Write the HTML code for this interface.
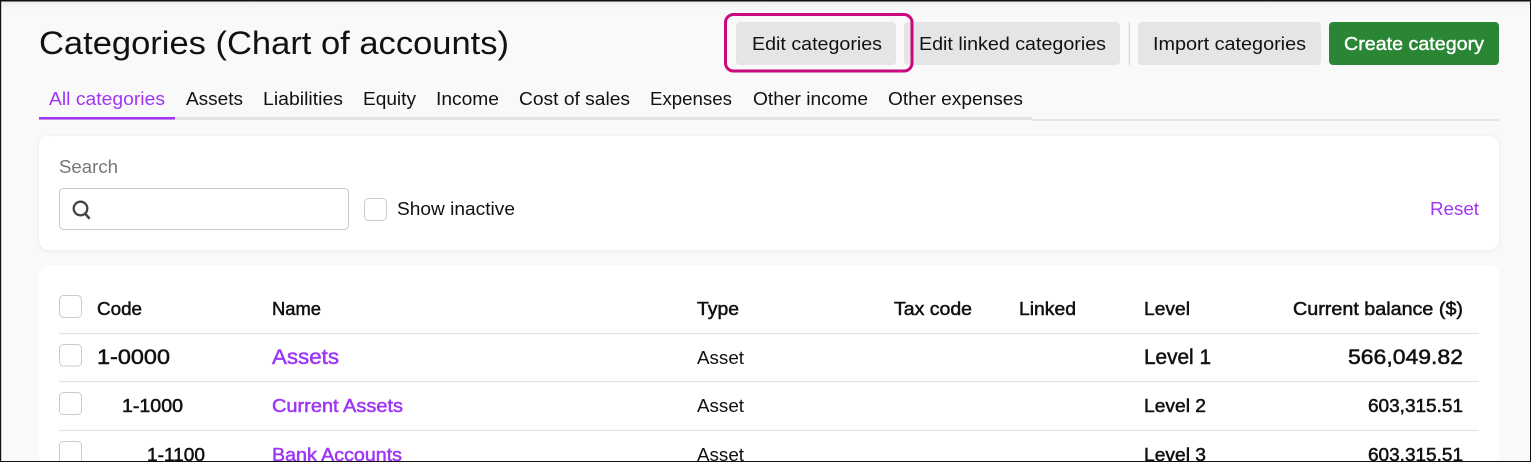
<!DOCTYPE html>
<html lang="en">
<head>
<meta charset="utf-8">
<title>Categories (Chart of accounts)</title>
<style>
html,body{margin:0;padding:0;width:1531px;height:462px;overflow:hidden;background:#f9f9f9}
svg{display:block;position:absolute;left:0;top:0}
text{font-family:"Liberation Sans",sans-serif;font-size:18px;fill:#111}
.m{stroke:#111;stroke-width:.35px}
.b{stroke:#111;stroke-width:.5px}
.p{fill:#9f36f5}
.pb{fill:#9f36f5;stroke:#9f36f5;stroke-width:.5px}
.cb{fill:#fff;stroke:#ccc;stroke-width:1}
.ln{stroke:#e4e4e4;stroke-width:1.2}
.btn{fill:#e5e5e5}
</style>
</head>
<body>
<svg width="1531" height="462" viewBox="0 0 1531 462" xmlns="http://www.w3.org/2000/svg">
<defs>
<filter id="s" x="-2%" y="-10%" width="104%" height="120%"><feDropShadow dx="0" dy="1" stdDeviation="2.5" flood-color="#000" flood-opacity=".07"/></filter>
<linearGradient id="tg" x1="0" y1="0" x2="0" y2="1"><stop offset="0" stop-color="#ececec"/><stop offset="1" stop-color="#f9f9f9"/></linearGradient>
<clipPath id="frame"><rect x="0" y="0" width="1531" height="461"/></clipPath>
</defs>
<rect width="1531" height="462" fill="#f9f9f9"/>
<rect x="0" y="1" width="1531" height="8" fill="url(#tg)"/>

<text x="39" y="54" style="font-size:32px" textLength="470" lengthAdjust="spacingAndGlyphs">Categories (Chart of accounts)</text>

<rect class="btn" x="736" y="22" width="160" height="43" rx="4"/>
<rect class="btn" x="904" y="22" width="216" height="43" rx="4"/>
<rect x="1128.500" y="22" width="1.500" height="43" fill="#dedede"/>
<rect class="btn" x="1138" y="22" width="183" height="43" rx="4"/>
<rect x="1329" y="22" width="170" height="43" rx="4" fill="#2a8535"/>
<rect x="725.500" y="14.500" width="186.500" height="56.500" rx="8" fill="none" stroke="#c9087f" stroke-width="3"/>
<text x="752" y="50" textLength="130" lengthAdjust="spacingAndGlyphs">Edit categories</text>
<text x="919" y="50" textLength="187" lengthAdjust="spacingAndGlyphs">Edit linked categories</text>
<text x="1153" y="50" textLength="153" lengthAdjust="spacingAndGlyphs">Import categories</text>
<text x="1344" y="50" textLength="140" lengthAdjust="spacingAndGlyphs" style="fill:#fff;stroke:#fff;stroke-width:.4px">Create category</text>

<rect x="1032" y="119" width="467" height="2" fill="#e5e5e5"/>
<rect x="39" y="117" width="993" height="3" fill="#e3e3e3"/>
<rect x="39" y="117" width="136" height="2.500" fill="#9f36f5"/>
<text class="p" x="49" y="105" textLength="116" lengthAdjust="spacingAndGlyphs">All categories</text>
<text x="186" y="105" textLength="57" lengthAdjust="spacingAndGlyphs">Assets</text>
<text x="263" y="105" textLength="80" lengthAdjust="spacingAndGlyphs">Liabilities</text>
<text x="363" y="105" textLength="53" lengthAdjust="spacingAndGlyphs">Equity</text>
<text x="436" y="105" textLength="63" lengthAdjust="spacingAndGlyphs">Income</text>
<text x="519" y="105" textLength="111" lengthAdjust="spacingAndGlyphs">Cost of sales</text>
<text x="650" y="105" textLength="82" lengthAdjust="spacingAndGlyphs">Expenses</text>
<text x="753" y="105" textLength="115" lengthAdjust="spacingAndGlyphs">Other income</text>
<text x="888" y="105" textLength="135" lengthAdjust="spacingAndGlyphs">Other expenses</text>

<rect x="39" y="136" width="1460" height="114" rx="10" fill="#fff" filter="url(#s)"/>
<text x="59" y="173" textLength="59" lengthAdjust="spacingAndGlyphs" style="fill:#777">Search</text>
<rect x="59.500" y="188.500" width="289" height="41" rx="4" fill="#fff" stroke="#c8c8c8"/>
<circle cx="80.500" cy="208.500" r="6.800" fill="none" stroke="#444" stroke-width="2.300"/>
<path d="M85 213.500 L89 218" fill="none" stroke="#444" stroke-width="2.500" stroke-linecap="round"/>
<rect class="cb" x="364.500" y="198.500" width="22" height="22" rx="4"/>
<text x="397" y="215" textLength="118" lengthAdjust="spacingAndGlyphs">Show inactive</text>
<text class="p" x="1430" y="215" textLength="49" lengthAdjust="spacingAndGlyphs">Reset</text>

<path d="M39 461 V275 a10 10 0 0 1 10 -10 H1489 a10 10 0 0 1 10 10 V461 Z" fill="#fff"/>

<rect class="cb" x="59.500" y="295.500" width="22" height="22" rx="4"/>
<text class="b" x="97" y="315" textLength="45" lengthAdjust="spacingAndGlyphs">Code</text>
<text class="b" x="272" y="315" textLength="49" lengthAdjust="spacingAndGlyphs">Name</text>
<text class="b" x="697" y="315" textLength="42" lengthAdjust="spacingAndGlyphs">Type</text>
<text class="b" x="894" y="315" textLength="78" lengthAdjust="spacingAndGlyphs">Tax code</text>
<text class="b" x="1019" y="315" textLength="57" lengthAdjust="spacingAndGlyphs">Linked</text>
<text class="b" x="1144" y="315" textLength="46" lengthAdjust="spacingAndGlyphs">Level</text>
<text class="b" x="1293" y="315" textLength="170" lengthAdjust="spacingAndGlyphs">Current balance ($)</text>
<line class="ln" x1="59" y1="333.500" x2="1479" y2="333.500"/>

<rect class="cb" x="59.500" y="344.500" width="22" height="21.500" rx="4"/>
<text class="b" x="97" y="364" style="font-size:21px" textLength="73" lengthAdjust="spacingAndGlyphs">1-0000</text>
<text class="pb" x="272" y="364" style="font-size:21px" textLength="67" lengthAdjust="spacingAndGlyphs">Assets</text>
<text x="697" y="364" textLength="47" lengthAdjust="spacingAndGlyphs">Asset</text>
<text class="b" x="1144" y="364" style="font-size:21px" textLength="67" lengthAdjust="spacingAndGlyphs">Level 1</text>
<text class="b" x="1348" y="364" style="font-size:21px" textLength="115" lengthAdjust="spacingAndGlyphs">566,049.82</text>
<line class="ln" x1="59" y1="381.500" x2="1479" y2="381.500"/>

<rect class="cb" x="59.500" y="392.500" width="22" height="22" rx="4"/>
<text class="b" x="122" y="412" textLength="61" lengthAdjust="spacingAndGlyphs">1-1000</text>
<text class="pb" x="272" y="412" textLength="131" lengthAdjust="spacingAndGlyphs">Current Assets</text>
<text x="697" y="412" textLength="47" lengthAdjust="spacingAndGlyphs">Asset</text>
<text class="b" x="1144" y="412" textLength="62" lengthAdjust="spacingAndGlyphs">Level 2</text>
<text class="b" x="1368" y="412" textLength="95" lengthAdjust="spacingAndGlyphs">603,315.51</text>
<line class="ln" x1="59" y1="430.500" x2="1479" y2="430.500"/>

<g clip-path="url(#frame)">
<path d="M59.500 461 V445.500 a4 4 0 0 1 4 -4 H77.500 a4 4 0 0 1 4 4 V461" fill="#fff" stroke="#ccc"/>
<text class="b" x="147" y="461" textLength="58" lengthAdjust="spacingAndGlyphs">1-1100</text>
<text class="pb" x="272" y="461" textLength="130" lengthAdjust="spacingAndGlyphs">Bank Accounts</text>
<text x="697" y="461" textLength="47" lengthAdjust="spacingAndGlyphs">Asset</text>
<text class="b" x="1144" y="461" textLength="62" lengthAdjust="spacingAndGlyphs">Level 3</text>
<text class="b" x="1368" y="461" textLength="95" lengthAdjust="spacingAndGlyphs">603,315.51</text>
</g>

<rect x="0" y="0" width="1531" height="1.500" fill="#111"/>
<rect x="0" y="0" width="1.200" height="462" fill="#111"/>
<rect x="1530" y="0" width="1" height="462" fill="#111"/>
<rect x="0" y="461" width="1531" height="1" fill="#111"/>
</svg>
</body>
</html>
